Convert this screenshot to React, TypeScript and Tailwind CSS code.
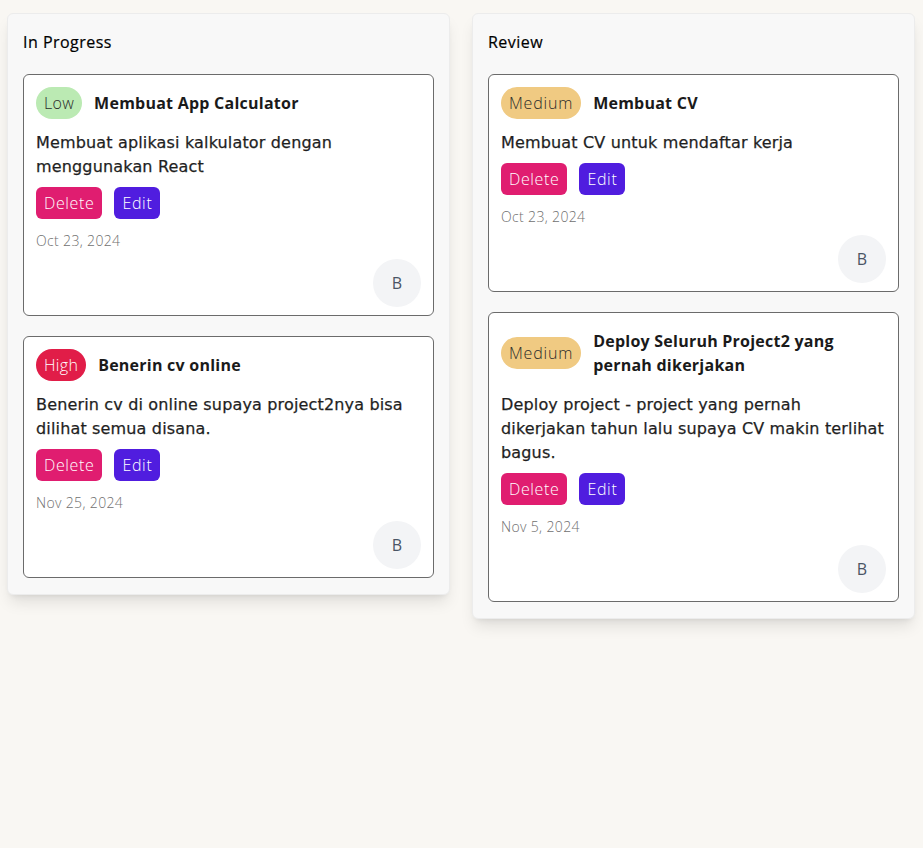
import React from "react";

type Task = {
  priority: "Low" | "Medium" | "High";
  title: string;
  desc: string;
  date: string;
};

const columns: { name: string; tasks: Task[] }[] = [
  {
    name: "In Progress",
    tasks: [
      {
        priority: "Low",
        title: "Membuat App Calculator",
        desc: "Membuat aplikasi kalkulator dengan menggunakan React",
        date: "Oct 23, 2024",
      },
      {
        priority: "High",
        title: "Benerin cv online",
        desc: "Benerin cv di online supaya project2nya bisa dilihat semua disana.",
        date: "Nov 25, 2024",
      },
    ],
  },
  {
    name: "Review",
    tasks: [
      {
        priority: "Medium",
        title: "Membuat CV",
        desc: "Membuat CV untuk mendaftar kerja",
        date: "Oct 23, 2024",
      },
      {
        priority: "Medium",
        title: "Deploy Seluruh Project2 yang pernah dikerjakan",
        desc: "Deploy project - project yang pernah dikerjakan tahun lalu supaya CV makin terlihat bagus.",
        date: "Nov 5, 2024",
      },
    ],
  },
];

function Badge({ p }: { p: Task["priority"] }) {
  if (p === "Low")
    return (
      <span className="shrink-0 h-8 px-2 rounded-full bg-[#bbeab3] text-[#2a2a2a] font-light tracking-[0.02em] flex items-center">
        Low
      </span>
    );
  if (p === "High")
    return (
      <span className="shrink-0 h-8 px-2 rounded-full bg-[#e11d48] text-white font-light tracking-[0.02em] flex items-center">
        High
      </span>
    );
  return (
    <span className="shrink-0 h-8 px-2 rounded-full bg-[#f0ca82] text-[#2a2a2a] font-light tracking-[0.05em] flex items-center">
      Medium
    </span>
  );
}

function Card({ t }: { t: Task }) {
  return (
    <div className="bg-white border border-[#6b6b6b] rounded-md px-3 pt-3 pb-2 flex flex-col">
      <div className="flex items-center gap-3">
        <Badge p={t.priority} />
        <div className="py-1 leading-6 font-bold tracking-[0.015em] text-[#1a1a1a]">{t.title}</div>
      </div>
      <p className="mt-3 leading-6 font-['DejaVu_Sans',sans-serif] tracking-[0.01em] text-[#1f1f1f] [-webkit-text-stroke:0.25px_#1f1f1f]">
        {t.desc}
      </p>
      <div className="mt-2 flex gap-3">
        <button className="h-8 px-2 rounded-md bg-[#e01d70] text-white font-light tracking-[0.04em]">Delete</button>
        <button className="h-8 px-2 rounded-md bg-[#501ddf] text-white font-light tracking-[0.04em]">Edit</button>
      </div>
      <div className="mt-3 text-sm leading-5 font-light tracking-[0.025em] text-[#6f6f6f]">{t.date}</div>
      <div className="mt-2 flex justify-end">
        <div className="w-12 h-12 rounded-full bg-gray-100 text-gray-600 flex items-center justify-center">
          B
        </div>
      </div>
    </div>
  );
}

export default function App() {
  return (
    <div
      className="min-h-screen bg-[#f9f7f3] pl-[7px] pt-[13px] flex items-start gap-[22px] overflow-hidden"
      style={{ fontFamily: "'Open Sans', 'Noto Sans', sans-serif" }}
    >
      {columns.map((c) => (
        <div
          key={c.name}
          className="w-[443px] shrink-0 bg-[#f8f8f8] border border-[#ececec] rounded-md shadow-lg px-[15px] pt-4 pb-4"
        >
          <h2 className="leading-6 font-medium tracking-[0.03em] text-black mb-5 [-webkit-text-stroke:0.2px_#000]">
            {c.name}
          </h2>
          <div className="flex flex-col gap-5">
            {c.tasks.map((t) => (
              <Card key={t.title} t={t} />
            ))}
          </div>
        </div>
      ))}
    </div>
  );
}
